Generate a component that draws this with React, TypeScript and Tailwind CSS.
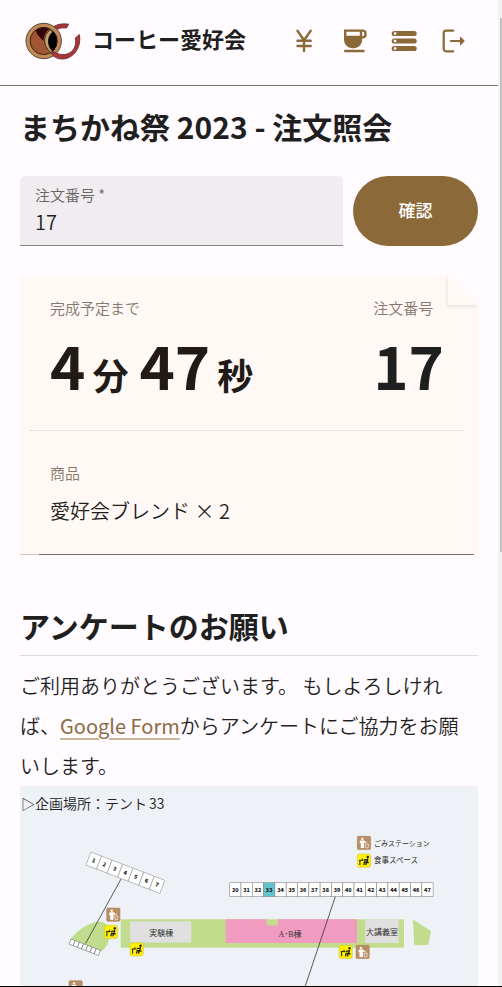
import type { ReactNode } from "react";

function Logo() {
  return (
    <svg viewBox="0 0 56 38" className="h-[38px] w-14 shrink-0" aria-hidden="true">
      <path d="M27.500 5.200Q35 .600 43.700 2.200L41.500 6Q35.500 5 31.500 7.600Z" fill="#aa353b" stroke="#5a2529" strokeWidth=".8" />
      <circle cx="18.7" cy="19" r="17.7" fill="#c08a55" stroke="#4a3a33" strokeWidth=".9" />
      <circle cx="18.7" cy="19" r="13.600" fill="#a05535" stroke="#2a1a16" strokeWidth=".9" />
      <path d="M10.500 8.300A13.600 13.600 0 0 1 24.500 6.800C20.500 10 18.500 14 18.500 19C15 15.500 11.500 12.500 10.500 8.300Z" fill="#33060e" />
      <path d="M25.500 7.800C17.500 13 17.500 24 26.500 31.500C31 26.500 33 14 25.500 7.800Z" fill="#c0a070" stroke="#2a1a16" strokeWidth=".8" />
      <path d="M28 9.500C21.500 14 21.500 24 27.500 29.500C33.300 24 33.300 14.500 28 9.500Z" fill="#000" />
      <path d="M50.400 16L54.300 12.500C57 25 48.500 37 37 37C31.500 37 27.500 34 25.500 30L29.800 30.200C40 36.500 53 30 50.400 16Z" fill="#aa353b" stroke="#5a2529" strokeWidth=".8" />
    </svg>
  );
}

function NavItem({ label, children }: { label: string; children: ReactNode }) {
  return (
    <a href="#" aria-label={label} className="flex h-[50px] w-[50px] items-center justify-center text-[#8b6938]">
      <svg viewBox="0 0 30 30" className="size-[30px]" fill="none" stroke="currentColor" strokeWidth="2.4" strokeLinecap="round" strokeLinejoin="round" aria-hidden="true">
        {children}
      </svg>
    </a>
  );
}

function TrashMark({ x, y }: { x: number; y: number }) {
  return (
    <g transform={`translate(${x} ${y})`}>
      <rect width="13.3" height="13.3" rx="1.200" fill="#b98e63" stroke="#a17a55" strokeWidth=".5" />
      <circle cx="5" cy="2.700" r="1.200" fill="#fff" />
      <path d="M3.200 4.300H7L9 6.300L8.200 7L6.800 6V11.800H3.500V6.500L2.500 7.500V5Z" fill="#fff" />
      <path d="M8 8L8.500 11.600H10.800L11.300 8M8 8H11.300M9.600 5.500V7" fill="none" stroke="#fff" strokeWidth=".6" />
    </g>
  );
}

function MealMark({ x, y }: { x: number; y: number }) {
  return (
    <g transform={`translate(${x} ${y})`}>
      <rect width="13.3" height="13.3" rx="2.200" fill="#ffef00" stroke="#c9bd3a" strokeWidth=".5" />
      <circle cx="10.500" cy="3" r="1.200" fill="#222" />
      <path d="M1.800 6.300H6.300M2.600 6.300V11M5 4.600V6" fill="none" stroke="#222" strokeWidth="1" />
      <path d="M10.500 4.500L9.700 8H7.200L6.500 11M10 5.500L6.800 6M11.500 8.500H9L8.600 11" fill="none" stroke="#222" strokeWidth="1.300" />
    </g>
  );
}

const eastTents = Array.from({ length: 18 }, (_, i) => 30 + i);
const westTents = [1, 2, 3, 4, 5, 6, 7];

function VenueMap() {
  return (
    <svg viewBox="0 0 458 324" role="img" aria-label="企画場所の地図" className="block w-full bg-[#eef2f7] font-['Liberation_Serif','Noto_Sans_CJK_JP',serif]">
      <text y="22.500" fontSize="14" fill="#222" className="font-['Noto_Sans_CJK_JP',sans-serif] font-[350]">
        <tspan x="1">▷</tspan>
        <tspan x="15">企画場所：テント</tspan>
        <tspan x="129">33</tspan>
      </text>

      <path d="M50 154C58 143 70 136 80 135.500C88 136 92 145 88 157C86 162 82 165 80 166Z" fill="#c1dc8c" />
      <rect x="100.700" y="133.300" width="283.300" height="28.400" fill="#c1dc8c" />
      <rect x="110" y="135.300" width="61.300" height="21.300" fill="#e0e0e0" />
      <path d="M205.700 133.300H246.700V139.600H258V133.300H337V157H205.700Z" fill="#f19bc1" />
      <rect x="345.300" y="133.300" width="33.300" height="23.700" fill="#e0e0e0" />
      <path d="M393 133.300L411 145.300L408.300 159L394.300 159.300Z" fill="#c1dc8c" />

      <g fill="#333" fontSize="8" textAnchor="middle">
        <text x="141.300" y="149.600">実験棟</text>
        <text x="270" y="151">A･B棟</text>
        <text x="362" y="148.600">大講義室</text>
      </g>

      <g transform="translate(71 66) rotate(21)">
        {westTents.map((n, i) => (
          <g key={n}>
            <rect x={i * 11.3} width="11.3" height="14" fill="#fff" stroke="#999" strokeWidth=".6" />
            <text x={i * 11.3 + 5.6} y="9" fontSize="5.500" fontWeight="900" textAnchor="middle" fill="#222" className="font-['Noto_Sans_CJK_JP',sans-serif]">{n}</text>
          </g>
        ))}
      </g>
      <g transform="translate(51 153) rotate(21)">
        {westTents.map((n, i) => (
          <rect key={n} x={i * 4.5} width="4.5" height="5.500" fill="#fff" stroke="#777" strokeWidth=".6" />
        ))}
      </g>
      <g transform="translate(209.700 96.700)">
        {eastTents.map((n, i) => (
          <g key={n}>
            <rect x={i * 11.3} width="11.3" height="14" fill={n === 33 ? "#5fc4cd" : "#fff"} stroke="#888" strokeWidth=".6" />
            <text x={i * 11.3 + 5.6} y="9" fontSize="5.500" fontWeight="900" textAnchor="middle" fill="#222" className="font-['Noto_Sans_CJK_JP',sans-serif]">{n}</text>
          </g>
        ))}
      </g>
      <path d="M101 93L65.700 157.300M315.300 110.700L257 284" stroke="#333" strokeWidth=".8" />

      <TrashMark x={86.7} y={122} />
      <TrashMark x={49} y={194.7} />
      <TrashMark x={336} y={159.3} />
      <TrashMark x={337.3} y={50.3} />
      <MealMark x={84.3} y={139.3} />
      <MealMark x={110} y={156.7} />
      <MealMark x={319} y={159.3} />
      <MealMark x={337.3} y={68} />
      <g fill="#333" fontSize="7">
        <text x="354" y="59.500">ごみステーション</text>
        <text x="354" y="77" fontSize="7.500">食事スペース</text>
      </g>
    </svg>
  );
}

export default function App() {
  return (
    <div className="flex h-screen overflow-hidden border-b border-black bg-[#fffbff] font-['Noto_Sans_CJK_JP',sans-serif] text-[#1f1f1f]">
      <div className="min-w-0 flex-1">
        <header className="flex h-[86px] items-center justify-between border-b border-[#7d7362] pr-[19px] pb-1 pl-[25px]">
          <a href="#" className="flex items-center gap-[11px]">
            <Logo />
            <span className="pb-1.5 text-[22px] leading-8 font-bold whitespace-nowrap">コーヒー愛好会</span>
          </a>
          <nav className="flex">
            <NavItem label="会計">
              <path d="M8.500 4.800L15 14.300L21.700 4.800M15 14.300V25M8.500 14.700H21.700M8.500 20H21.700" />
            </NavItem>
            <NavItem label="注文">
              <path d="M6.200 4.600H24A3 3 0 0 1 26.500 7.600V8.500A3 3 0 0 1 23.500 11.400H22V4.600M6.200 25H24.500" />
              <path d="M6.200 4.600V14A7 7 0 0 0 13.200 21H15A7 7 0 0 0 22 14V11H6.200" fill="currentColor" />
            </NavItem>
            <NavItem label="一覧">
              <g stroke="none" fill="currentColor">
                <rect x="2.700" y="4.900" width="25" height="5.200" rx="2.600" />
                <rect x="2.700" y="12.400" width="25" height="5.200" rx="2.600" />
                <rect x="2.700" y="19.900" width="25" height="5.200" rx="2.600" />
              </g>
              <g stroke="none" fill="#fffbff">
                <rect x="4.800" y="6.200" width="2.600" height="2.600" rx=".8" />
                <rect x="4.800" y="13.700" width="2.600" height="2.600" rx=".8" />
                <rect x="4.800" y="21.200" width="2.600" height="2.600" rx=".8" />
              </g>
            </NavItem>
            <NavItem label="ログアウト">
              <path d="M14.200 4.700H7A2.500 2.500 0 0 0 4.700 7V23A2.500 2.500 0 0 0 7 25.300H14.200M12 15H23" strokeWidth="2.200" />
              <path d="M21.500 11.500L25 15L21.500 18.500Z" fill="currentColor" strokeWidth="1.200" />
            </NavItem>
          </nav>
        </header>

        <main className="px-5">
          <h1 className="pt-[18px] text-[30px] leading-[44px] font-bold">まちかね祭 2023 - 注文照会</h1>

          <form className="mt-[28px] flex gap-[10px]">
            <div className="flex h-[70px] min-w-0 flex-1 flex-col rounded-t-[5px] border-b border-[#8a8486] bg-[#f0ecef] px-[15px] pt-2">
              <label htmlFor="order" className="text-[15px] leading-[22px] font-[350] text-[#666]">注文番号 *</label>
              <input id="order" defaultValue="17" className="w-full bg-transparent text-xl leading-8 font-[350] outline-none" />
            </div>
            <button type="button" className="h-[70px] w-[125px] rounded-full bg-[#8b6938] pb-[2px] text-[17px] font-medium text-white">確認</button>
          </form>

          <section className="relative mt-[30px] bg-[#fff8f5]">
            <div className="absolute top-0 right-0 size-[30px] overflow-hidden bg-[#fffbff]">
              <div className="size-full bg-[#fff8f5] [clip-path:polygon(0_0,100%_100%,0_100%)]" />
            </div>
            <div className="absolute top-0 right-0 h-[29px] w-[30px] shadow-[-1px_2px_3px_rgba(120,80,60,0.12)] [clip-path:inset(0_0_-6px_-6px)]" />
            <div className="mr-[14px] ml-[10px] flex h-[155px] justify-between border-b border-dotted border-[#e0cfcb] pt-5 pr-[20px] pl-5">
              <div>
                <p className="text-[15px] leading-6 font-[350] text-[#85786b]">完成予定まで</p>
                <p className="mt-2 flex items-baseline text-[60px] leading-[72px] font-bold text-[#211a16]">
                  4<span className="mr-[11px] ml-[7px] text-[36px]">分</span>
                  47<span className="ml-[7px] text-[36px]">秒</span>
                </p>
              </div>
              <div>
                <p className="text-[15px] leading-6 font-[350] text-[#85786b]">注文番号</p>
                <p className="mt-2 text-[60px] leading-[72px] font-bold">17</p>
              </div>
            </div>
            <div className="h-[123px] px-[30px] pt-[30px]">
              <p className="text-[15px] leading-6 font-[350] text-[#85786b]">商品</p>
              <p className="mt-[10px] text-xl leading-8 font-[350]">愛好会ブレンド × 2</p>
            </div>
            <div className="mr-1 flex h-px">
              <div className="w-[19px] bg-[#d8c4b0]" />
              <div className="flex-1 bg-[#80695a]" />
            </div>
          </section>

          <section className="mt-[48px]">
            <h2 className="border-b border-[#dedade] pb-2 text-[30px] leading-[44px] font-bold">アンケートのお願い</h2>
            <p className="mt-[10px] pr-2 text-xl leading-10 font-[350]">
              ご利用ありがとうございます。 もしよろしければ、
              <a href="#" className="font-normal text-[#8b6b43] underline decoration-[#c9b597] decoration-2 underline-offset-4">Google Form</a>
              からアンケートにご協力をお願いします。
            </p>
            <VenueMap />
          </section>
        </main>
      </div>
      <div className="w-1 shrink-0 bg-[#f1f1f1] pt-[18px] pl-[2px]" aria-hidden="true">
        <div className="h-[534px] bg-[#c1c1c1]" />
      </div>
    </div>
  );
}
